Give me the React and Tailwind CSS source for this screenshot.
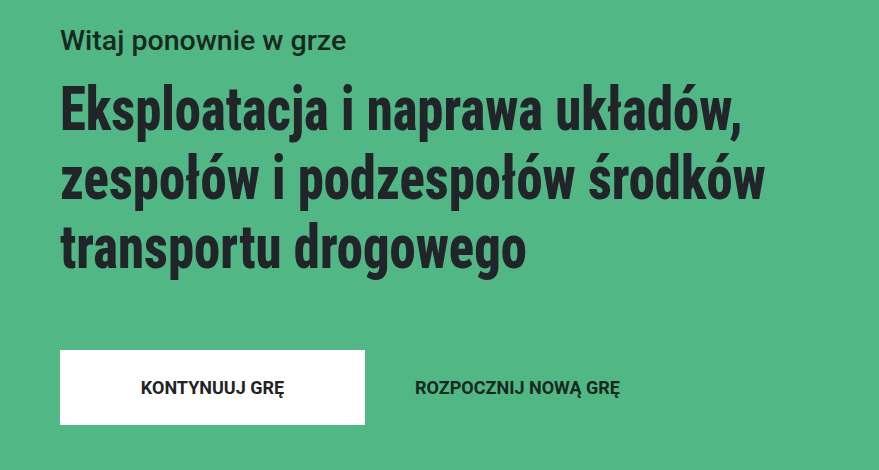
export default function App() {
  return (
    <div className="min-h-[470px] bg-[#51b784] px-[60px] pt-[24px] font-['Roboto',sans-serif] text-[#212428]">
      <p className="text-[28.5px] leading-[34px] font-medium text-[#172a20]">Witaj ponownie w grze</p>
      <h1 className="mt-[16px] origin-left scale-x-[0.85] whitespace-nowrap text-[62px] leading-[69px] font-extrabold font-stretch-condensed">
        <span className="block">Eksploatacja i naprawa układów,</span>
        <span className="block">zespołów i podzespołów środków</span>
        <span className="block">transportu drogowego</span>
      </h1>
      <div className="mt-[69px] flex">
        <button className="flex h-[75px] w-[305px] items-center justify-center bg-white text-[18px] font-bold uppercase text-[#222326]">
          Kontynuuj grę
        </button>
        <button className="flex h-[75px] w-[305px] items-center justify-center text-[18px] font-bold uppercase text-[#16291f]">
          Rozpocznij nową grę
        </button>
      </div>
    </div>
  );
}
